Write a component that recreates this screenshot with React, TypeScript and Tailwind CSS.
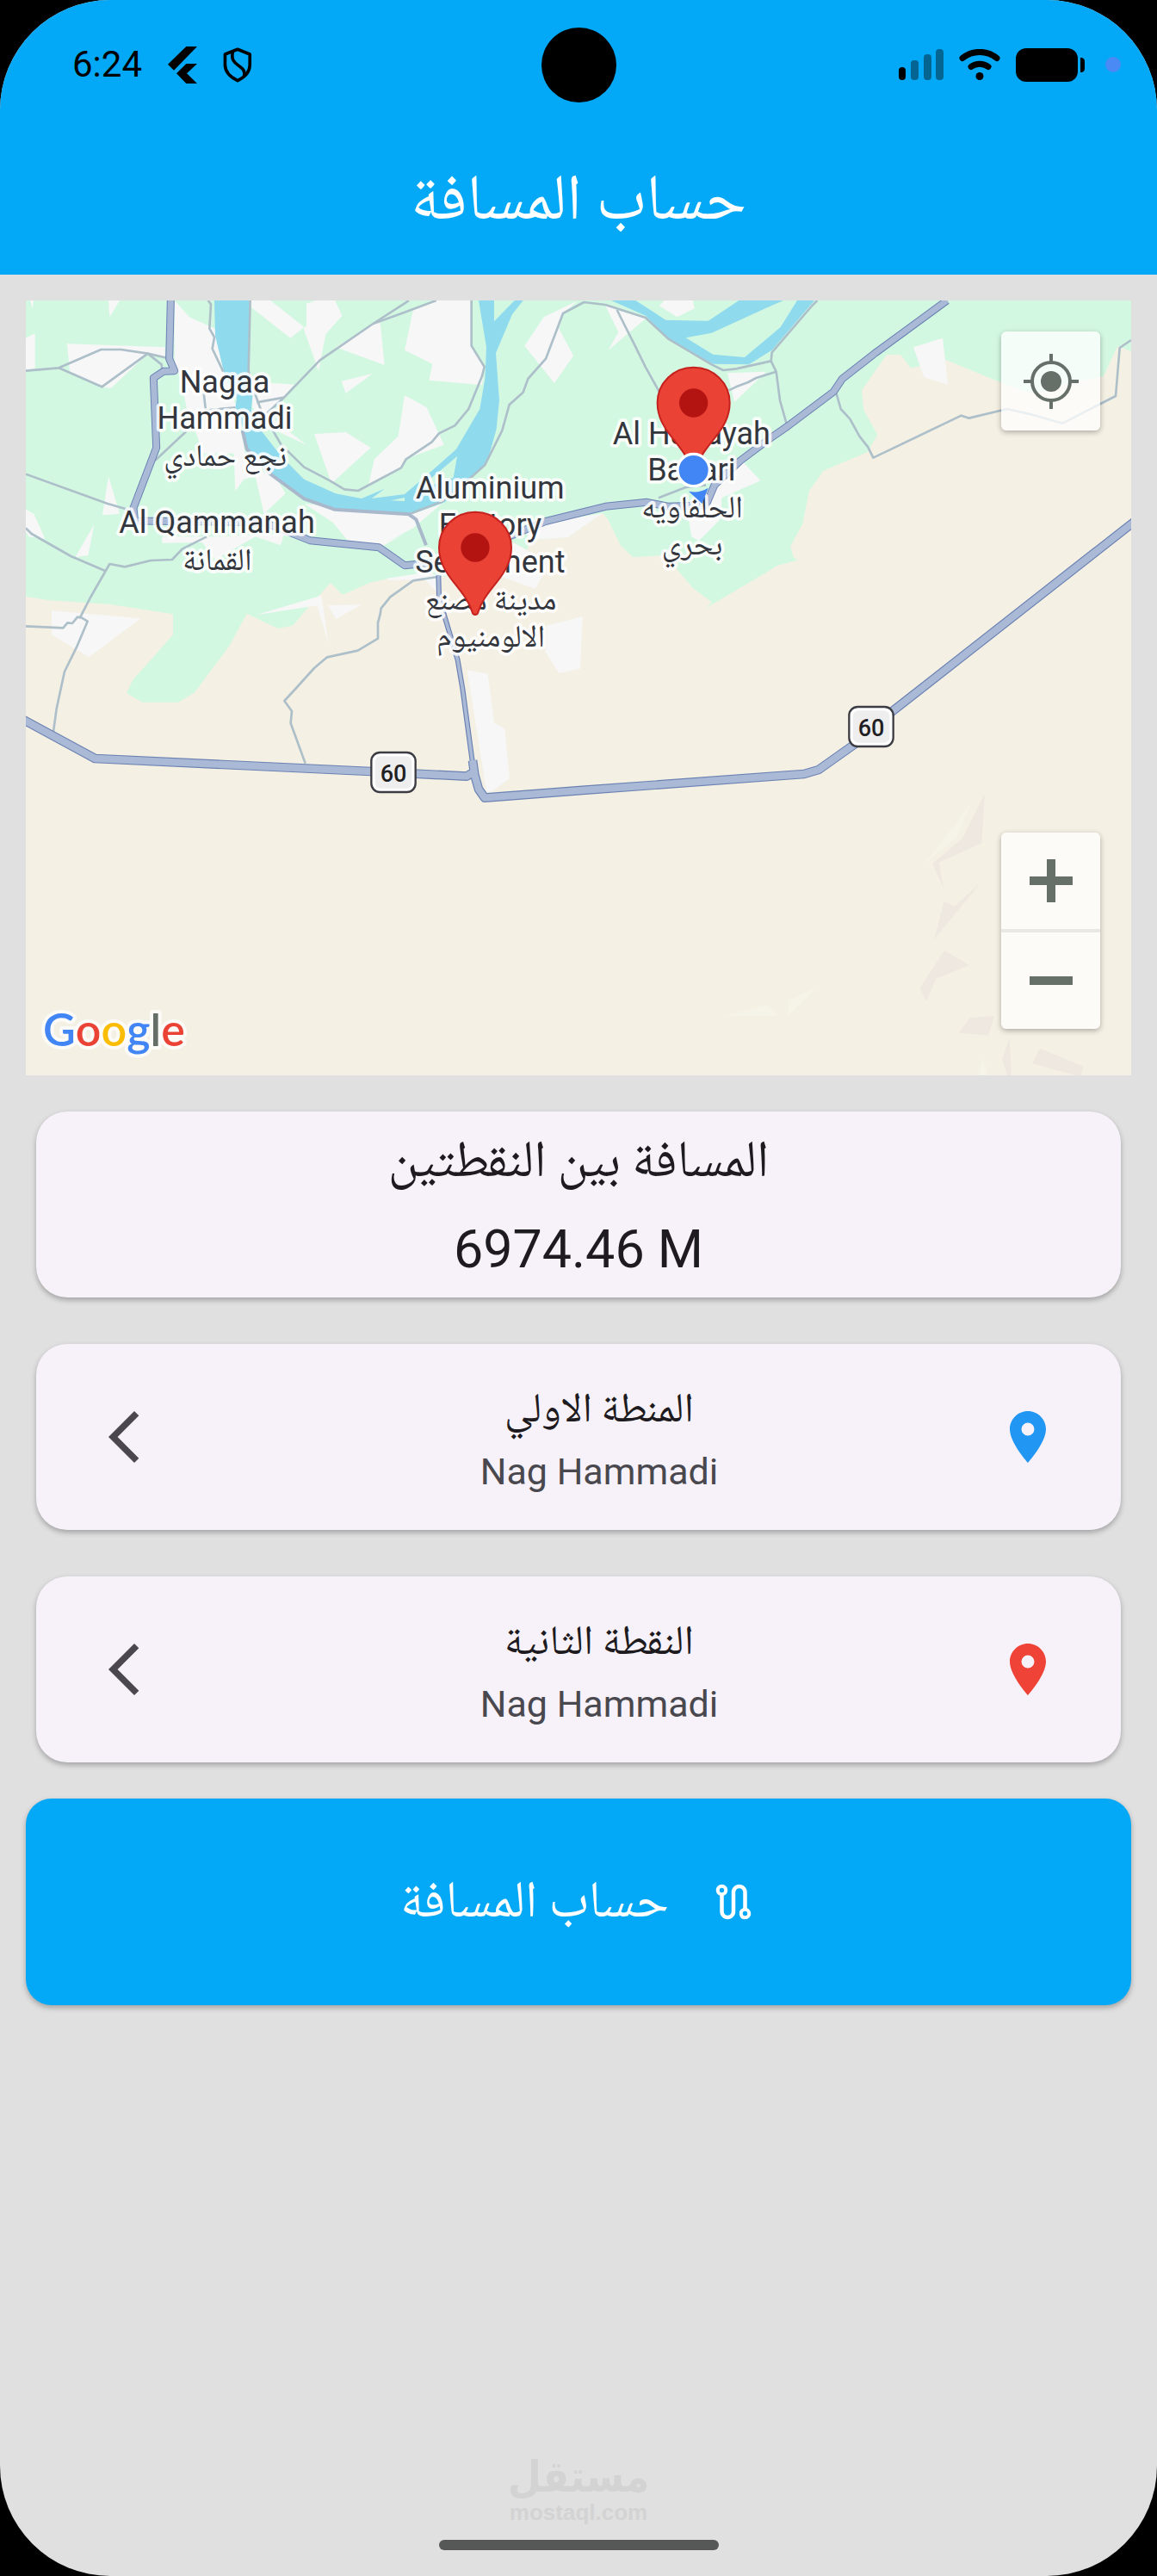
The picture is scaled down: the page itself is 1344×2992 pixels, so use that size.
import React, { useState } from 'react';

const AREAS = {
  green: [
    '30,27 3882,27 3882,204 3835,186 3785,292 3670,312 3580,345 3512,345 3420,310 3238,235 3115,263 3078,216 3030,216 2943,340 2950,408 2998,495 2962,556 2810,620 2760,690 2737,805 2695,883 2705,922 2720,932 2650,950 2610,975 2402,1098 2420,1078 2355,1030 2300,965 2255,915 2145,922 2102,880 2058,790 2040,768 1920,852 1785,862 1777,897 1730,870 1550,985 1290,997 1230,1010 1140,1050 1130,1050 1092,1010 1055,1052 1015,1095 960,1160 908,1170 800,1118 740,1230 650,1350 619,1392 562,1427 436,1427 381,1395 402,1350 543,1192 543,1120 320,1085 110,1072 30,1058',
  ],
  urban: [
    '45,27 57,27 53,55',
    '318,27 357,27 322,85',
    '30,158 62,142 62,265 30,268',
    '174,178 515,190 515,225 455,212 327,332 290,328 183,275',
    '548,27 600,85 690,125 720,275 765,400 800,590 905,650 935,700 860,770 830,640 790,650 760,690 755,560 650,560 590,400 570,300 548,250',
    '820,310 965,320 930,360 870,420 930,470 1008,530 900,480 820,400',
    '812,27 883,27 1000,120 952,158 815,50',
    '1008,38 1040,27 1108,27 1132,80 1075,145 1050,272 998,125 1008,115',
    '1250,105 1265,105 1280,252 1110,190',
    '1130,308 1238,282 1145,350',
    '1035,492 1145,486 1232,540 1100,660 1092,655',
    '1350,357 1427,400 1487,530 1350,580 1335,610 1225,665 1245,580 1328,500',
    '318,640 357,770 297,775',
    '30,755 58,770 97,858 40,850 30,830',
    '268,808 247,915 202,922',
    '505,850 700,850 930,840 918,880 830,850 690,930 645,870 505,872',
    '1000,735 1380,770 1480,735 1380,820 1290,868 1350,840 1278,880 1165,880 1100,800',
    '1290,995 1420,975 1470,985 1470,1050 1420,1000 1290,1002',
    '1725,870 1777,897 1790,910 1835,980 1805,1032 1690,990 1640,1000',
    '2040,768 1920,852 1785,862 1770,830 1850,800',
    '120,1108 430,1135 250,1270 120,1192',
    '835,1122 1060,1055 1085,1225 1045,1090',
    '1083,1090 1200,1087 1110,1138',
    '1970,1128 1962,1310 1887,1325 1840,1250 1845,1160',
    '1568,1315 1640,1328 1662,1498 1699,1520 1716,1693 1654,1738 1635,1738',
    '1380,60 1460,27 1583,27 1583,185 1628,258 1620,322 1435,305 1447,248 1350,200',
    '1835,85 1955,27 1902,72 1888,125 1938,220 1872,315 1768,185',
    '2045,35 2090,60 2190,90 2060,200 2095,137',
    '2237,45 2255,27 2355,27 2360,55 2300,85',
    '2475,280 2610,275 2500,380',
    '2530,590 2590,655 2455,715 2450,790 2375,865 2350,850 2340,790 2420,700',
    '3123,190 3225,158 3243,320 3160,295',
  ],
  water: [
    '687,27 808,27 805,280 815,290 820,360 815,410 850,480 920,570 1000,650 1110,700 1200,717 1280,683 1235,717 1350,702 1440,625 1530,545 1612,405 1630,300 1635,190 1608,27 1662,27 1662,100 1733,27 1763,27 1725,75 1668,210 1680,375 1670,475 1638,590 1580,645 1490,730 1365,775 1100,755 1000,715 880,625 805,560 790,480 760,400 765,370 720,275 690,150',
    '2070,27 2155,27 2260,95 2408,98 2515,27 2670,27 2610,53 2420,140 2330,157 2425,215 2535,225 2660,120 2718,27 2778,27 2630,200 2550,250 2425,248 2270,165 2190,80',
  ],
  island: ['1533,570 1520,645 1390,690 1450,640', '1302,724 1350,714 1350,726'],
  ridge: [
    '3372,1745 3295,1900 3190,1990 3228,2075 3212,1985 3361,1918',
    '3358,2055 3196,2252 3230,2120 3266,2138',
    '3231,2292 3318,2343 3202,2390 3167,2470 3146,2422',
    '3320,2526 3405,2520 3384,2588 3282,2579',
    '3458,2598 3465,2727 3450,2727 3432,2670',
    '3564,2633 3714,2695 3708,2727 3689,2727 3538,2686',
  ],
  light: [
    '3323,1780 3276,1895 3162,1990',
    '2450,2522 2615,2483 2653,2518',
    '2685,2520 2689,2465 2787,2420',
    '3365,2665 3382,2727 3350,2727',
  ],
};

const MINOR_ROADS = [
  '30,272 145,262 292,198 362,198 455,212 525,228',
  '145,262 295,328 455,212 503,250 505,270',
  '665,27 675,40 670,125 687,155 680,195 718,275',
  '812,27 806,275 835,370 850,410 920,530 1000,608 1090,655 1140,685 1188,690 1338,610 1355,580 1445,520 1470,490 1525,463 1573,405 1620,290 1628,258 1583,185 1583,27',
  '835,382 930,365 1055,235 1240,108 1350,37 1365,27',
  '1240,108 1350,68 1460,27',
  '870,420 930,365',
  '650,350 657,410 760,400',
  '480,585 590,482',
  '30,632 315,735 400,760',
  '30,820 50,840 187,918 308,970',
  '660,850 575,893 540,930 465,933 375,955 322,945 255,1062 220,1130 245,1145 207,1235 165,1320 152,1380 137,1450 126,1530',
  '30,1162 160,1168 175,1150 192,1152 210,1130 222,1132',
  '1465,990 1380,1003 1300,1060 1268,1100 1265,1120 1257,1150 1257,1205 1187,1247 1080,1270 1035,1308 970,1380 931,1422 957,1458 953,1500 1004,1640',
  '1365,772 1480,728 1580,645 1630,600 1690,480 1715,390 1763,347 1780,300 1842,230 1902,72 1975,33 2050,42 2190,87 2268,160 2420,250 2460,270 2505,265 2627,238 2630,208 2770,45 2788,27',
  '2090,60 2153,185 2190,260 2240,350 2330,560',
  '2480,340 2505,328 2547,312 2575,297 2645,275',
  '2627,238 2645,275 2658,375 2682,460',
  '2855,352 2870,405 2902,440 2935,500 2965,538 2983,575 3290,428 3317,437 3450,405 3537,425 3643,455 3828,360 3842,192 3882,165',
  '2235,715 2330,678 2400,670',
];

const RIVER_ROAD = '785,480 800,545 880,630 1000,718 1105,755 1365,772 1390,790 1425,880';

const MAIN_ROADS = [
  '535,27 530,230 548,272 510,274 475,297 485,540 405,750 410,795 860,800 1020,863 1260,887 1350,950 1470,938 1640,880 1840,797 2050,745 2195,730 2270,745 2400,740 2430,670 2520,585 2630,503 2685,465 2845,345 2875,300 2990,210 3240,27',
];

const LINK_ROAD = '1468,985 1470,1060 1490,1130 1535,1280 1552,1380 1587,1640';

const HIGHWAY = [
  '20,1487 271,1623 1231,1668 1566,1685 1592,1670',
  '1587,1630 1594,1680 1608,1730 1629,1760 1980,1733 2742,1677 2793,1662 2920,1572 3054,1455 3150,1380 3900,792',
];

// each label is a block of centred lines, first baseline at y
const LABELS: { x: number; y: number; lines: string[]; ar?: boolean }[] = [
  { x: 723, y: 347, lines: ['Nagaa', 'Hammadi'] },
  { x: 725, y: 603, lines: ['نجع حمادي'], ar: true },
  { x: 696, y: 837, lines: ['Al Qammanah'] },
  { x: 697, y: 965, lines: ['القمانة'], ar: true },
  { x: 1648, y: 718, lines: ['Aluminium', 'Factory', 'Settlement'] },
  { x: 1650, y: 1104, lines: ['مدينة مصنع', 'الالومنيوم'], ar: true },
  { x: 2350, y: 527, lines: ['Al Halfayah', 'Bahari'] },
  { x: 2352, y: 783, lines: ['الحلفاويه', 'بحري'], ar: true },
];

const Areas = ({ items, fill }: { items: string[]; fill: string }) => (
  <g fill={fill}>
    {items.map((points) => (
      <polygon key={points} points={points} />
    ))}
  </g>
);

const Roads = ({ items, color, width }: { items: string[]; color: string; width: number }) => (
  <g fill="none" stroke={color} strokeWidth={width} strokeLinejoin="round">
    {items.map((points) => (
      <polyline key={points} points={points} />
    ))}
  </g>
);

const MapPin = ({ x, y }: { x: number; y: number }) => (
  <g transform={`translate(${x} ${y})`}>
    <path
      d="M0-124C-70-124-126-69-126 0c0 48 22 84 52 122C-42 162-20 190-10 226q3 8 10 8t10-8c10-36 32-64 64-104C104 84 126 48 126 0 126-69 70-124 0-124z"
      fill="#ea4335"
      stroke="#c5221f"
      strokeWidth="6"
    />
    <circle r="50" fill="#b31412" />
  </g>
);

const RouteShield = ({ x, y }: { x: number; y: number }) => (
  <g transform={`translate(${x} ${y})`}>
    <rect x="-77" y="-69" width="154" height="138" rx="30" fill="#fff" stroke="#3c3c43" strokeWidth="7" />
    <rect x="-64" y="-56" width="128" height="112" rx="20" fill="#eeeeef" />
    <text y="32" textAnchor="middle" fontSize="81" fill="#1f1f24" className="font-[Roboto,sans-serif] font-medium">
      60
    </text>
  </g>
);

function MapCanvas() {
  return (
    <svg viewBox="30 27 3852 2700" preserveAspectRatio="xMidYMid slice" className="block h-[900px] w-full bg-[#f5f0e4]">
      <Areas items={AREAS.green} fill="#d3f8e2" />
      <Areas items={AREAS.urban} fill="#f7f7f7" />
      <Areas items={AREAS.water} fill="#90daee" />
      <Areas items={AREAS.island} fill="#d3f8e2" />
      <Areas items={AREAS.ridge} fill="#eee8e0" />
      <Areas items={AREAS.light} fill="#f6f3e8" />

      <Roads items={MINOR_ROADS} color="#adbfc9" width={8} />
      <Roads items={[RIVER_ROAD]} color="#a9b8cb" width={12} />
      <Roads items={MAIN_ROADS} color="#6b82b3" width={27} />
      <Roads items={MAIN_ROADS} color="#a9b9d6" width={21} />
      <Roads items={[LINK_ROAD]} color="#6b82b3" width={18} />
      <Roads items={HIGHWAY} color="#6b82b3" width={32} />
      <Roads items={HIGHWAY} color="#a9b9d6" width={25} />
      <Roads items={[LINK_ROAD]} color="#a9b9d6" width={11} />

      <RouteShield x={1311} y={1671} />
      <RouteShield x={2976} y={1512} />

      <g
        textAnchor="middle"
        fill="#33363d"
        stroke="#ffffff"
        strokeOpacity="0.85"
        strokeWidth="22"
        strokeLinejoin="round"
        paintOrder="stroke"
        fontSize="108"
      >
        {LABELS.map(({ x, y, lines, ar }) => (
          <text
            key={lines[0]}
            y={y}
            className={ar ? "font-['Noto_Naskh_Arabic','DejaVu_Sans',sans-serif]" : 'font-[Roboto,sans-serif]'}
          >
            {lines.map((line, i) => (
              <tspan key={line} x={x} dy={i ? 128 : 0}>
                {line}
              </tspan>
            ))}
          </text>
        ))}
      </g>

      <MapPin x={2357} y={384} />
      <MapPin x={1596} y={888} />
      <path d="M2340 692q35 8 68-12l-21 55z" fill="#4285f4" />
      <circle cx="2357" cy="618" r="56" fill="#4285f4" stroke="#fff" strokeWidth="10" />

      <text
        x="90"
        y="2625"
        fontSize="156"
        stroke="#fff"
        strokeOpacity="0.7"
        strokeWidth="24"
        strokeLinejoin="round"
        paintOrder="stroke"
        className="font-[Lato,sans-serif] font-semibold"
      >
        <tspan fill="#4285f4">G</tspan>
        <tspan fill="#ea4335">o</tspan>
        <tspan fill="#fbbc04">o</tspan>
        <tspan fill="#4285f4">g</tspan>
        <tspan fill="#666e68">l</tspan>
        <tspan fill="#ea4335">e</tspan>
      </text>
    </svg>
  );
}

function StatusBar() {
  return (
    <div className="grid h-[150px] grid-cols-3 items-center">
      <div className="flex items-center gap-[30px] pl-[84px]">
        <span className="text-[42px] leading-[48px] text-black">6:24</span>
        <svg viewBox="42 42 102 129" className="h-[43px] w-[34px]">
          <path d="M106 42h38L63 125 42 104zM106 102h38l-36 34 36 35h-38l-34-35z" />
        </svg>
        <svg viewBox="240 44 102 124" className="h-[41px] w-[34px]" fill="none" stroke="#000" strokeWidth="11">
          <path d="M291 51l43 17v38c0 24-17 42-43 55-26-13-44-31-44-55V68z" strokeLinejoin="round" />
          <path d="M274 60c-6 26 4 36 20 48 18 13 24 20 20 38" />
        </svg>
      </div>

      <div className="size-[87px] justify-self-center rounded-full bg-black" />

      <div className="flex items-center justify-end gap-[18px] pr-[42px]">
        <svg viewBox="0 0 52 36" className="h-9 w-[52px]">
          <rect x="0" y="21" width="8" height="15" rx="4" />
          <g fill="#046593">
            <rect x="14" y="13" width="9" height="23" rx="4" />
            <rect x="29" y="6" width="9" height="30" rx="4" />
            <rect x="43" y="0" width="9" height="36" rx="4" />
          </g>
        </svg>
        <svg viewBox="0 0 48 36" className="h-9 w-12" fill="none" stroke="#000" strokeWidth="7" strokeLinecap="round">
          <path d="M4 10.500c12-9.500 28-9.500 40 0M14 20.500c6-4.500 14-4.500 20 0" />
          <circle cx="24" cy="31.500" r="4.500" fill="#000" stroke="none" />
        </svg>
        <svg viewBox="0 0 80 39" className="h-[39px] w-20">
          <rect width="72" height="39" rx="12" />
          <path d="M75 11c4 0 5 2 5 5v7c0 3-1 5-5 5z" />
        </svg>
        <span className="ml-1.5 size-[18px] rounded-full bg-[#4a8af4]" />
      </div>
    </div>
  );
}

function PointCard({ title, place, pin }: { title: string; place: string; pin: string }) {
  return (
    <div
      dir="rtl"
      className="flex items-center rounded-[36px] bg-[#f7f2fa] pr-[72px] pl-[30px] shadow-[0_3px_6px_rgba(0,0,0,0.28)]"
    >
      <svg viewBox="0 0 24 24" className={`size-[72px] ${pin}`}>
        <path d="M12 2C8.130 2 5 5.130 5 9c0 5.250 7 13 7 13s7-7.750 7-13c0-3.870-3.130-7-7-7zm0 9.500a2.500 2.500 0 0 1 0-5 2.500 2.500 0 0 1 0 5z" />
      </svg>
      <div className="mr-12 ml-[66px] flex flex-1 flex-col items-center gap-2 pt-[50px] pb-[38px]">
        <h2 className="font-['Noto_Naskh_Arabic','DejaVu_Sans',sans-serif] text-5xl leading-[60px] text-[#1d1b20]">
          {title}
        </h2>
        <p dir="ltr" className="text-[43px] leading-[60px] text-[#49484e]">
          {place}
        </p>
      </div>
      <button type="button" aria-label={title} className="p-9">
        <svg viewBox="0 0 24 24" className="size-[72px] fill-[#4a474e]">
          <path d="M17.770 3.770 16 2 6 12l10 10 1.770-1.770L9.540 12z" />
        </svg>
      </button>
    </div>
  );
}

export default function App() {
  const [distance] = useState(6974.46);

  return (
    <div className="bg-black font-[Roboto,sans-serif]">
      <div className="flex min-h-screen flex-col overflow-hidden rounded-[128px] bg-[#e0e0e0]">
        <header className="bg-[#03a9f6]">
          <StatusBar />
          <h1 className="h-[169px] text-center font-['Noto_Naskh_Arabic','DejaVu_Sans',sans-serif] text-[75px] leading-[176px] text-white">
            حساب المسافة
          </h1>
        </header>

        <main className="flex flex-col px-[30px] pt-[30px]">
          <div className="relative">
            <MapCanvas />
            <button
              type="button"
              aria-label="My location"
              className="absolute top-9 right-9 flex size-[115px] items-center justify-center rounded-md bg-white/75 shadow-[0_2px_6px_rgba(0,0,0,0.3)]"
            >
              <svg viewBox="0 0 64 64" className="size-16" fill="none" stroke="#666f68" strokeWidth="4">
                <circle cx="32" cy="32" r="22" />
                <circle cx="32" cy="32" r="12" fill="#666f68" stroke="none" />
                <path d="M32 0v9M32 55v9M0 32h9M55 32h9" />
              </svg>
            </button>
            <div className="absolute right-9 bottom-[54px] flex w-[115px] flex-col divide-y-4 divide-[#e8e8e5] rounded-md bg-white/75 shadow-[0_2px_6px_rgba(0,0,0,0.3)]">
              <button type="button" aria-label="Zoom in" className="flex h-[116px] items-center justify-center">
                <svg viewBox="0 0 50 50" className="size-[50px] fill-[#666f68]">
                  <path d="M20 0h10v20h20v10H30v20H20V30H0V20h20z" />
                </svg>
              </button>
              <button type="button" aria-label="Zoom out" className="flex h-28 items-center justify-center">
                <svg viewBox="0 0 50 50" className="size-[50px] fill-[#666f68]">
                  <path d="M0 20h50v10H0z" />
                </svg>
              </button>
            </div>
          </div>

          <div className="mt-[42px] flex flex-col gap-[54px] px-3">
            <section className="flex flex-col items-center gap-[18px] rounded-[36px] bg-[#f7f2fa] pt-[22px] pb-4 text-[#1d1b20] shadow-[0_3px_6px_rgba(0,0,0,0.28)]">
              <h2 className="font-['Noto_Naskh_Arabic','DejaVu_Sans',sans-serif] text-[60px] leading-[80px]">
                المسافة بين النقطتين
              </h2>
              <p className="text-[61px] leading-[80px]">{distance} M</p>
            </section>
            <PointCard title="المنطة الاولي" place="Nag Hammadi" pin="fill-[#2196f3]" />
            <PointCard title="النقطة الثانية" place="Nag Hammadi" pin="fill-[#ee4336]" />
          </div>

          <button
            type="button"
            dir="rtl"
            className="mt-[42px] flex h-60 items-center justify-center gap-12 rounded-[30px] bg-[#03a9f6] text-white shadow-[0_3px_6px_rgba(0,0,0,0.28)]"
          >
            <svg viewBox="0 0 24 24" className="size-[54px] fill-white">
              <path
                fillRule="evenodd"
                d="M19 15.180V7c0-2.210-1.790-4-4-4s-4 1.790-4 4v10c0 1.100-.9 2-2 2s-2-.9-2-2V8.820C8.160 8.400 9 7.300 9 6c0-1.660-1.340-3-3-3S3 4.340 3 6c0 1.300.84 2.400 2 2.820V17c0 2.210 1.790 4 4 4s4-1.790 4-4V7c0-1.100.9-2 2-2s2 .9 2 2v8.180A2.996 2.996 0 0 0 18 21c1.660 0 3-1.340 3-3 0-1.300-.84-2.400-2-2.820zM6 7.200a1.200 1.200 0 1 1 0-2.400 1.200 1.200 0 0 1 0 2.400zm12 12a1.200 1.200 0 1 1 0-2.400 1.200 1.200 0 0 1 0 2.400z"
              />
            </svg>
            <span className="pt-2 font-['Noto_Naskh_Arabic','DejaVu_Sans',sans-serif] text-[60px] leading-[80px]">
              حساب المسافة
            </span>
          </button>
        </main>

        <footer className="mt-auto flex flex-col items-center pb-[30px]">
          <div className="flex flex-col items-center font-bold text-[#d3d3d3]">
            <span dir="rtl" className="font-['DejaVu_Sans_Condensed','DejaVu_Sans',sans-serif] text-[50px] leading-[50px]">
              مستقل
            </span>
            <span className="font-['Liberation_Sans',sans-serif] text-[26px] leading-8">mostaql.com</span>
          </div>
          <div className="mt-4 h-3 w-[325px] rounded-full bg-[#565857]" />
        </footer>
      </div>
    </div>
  );
}
